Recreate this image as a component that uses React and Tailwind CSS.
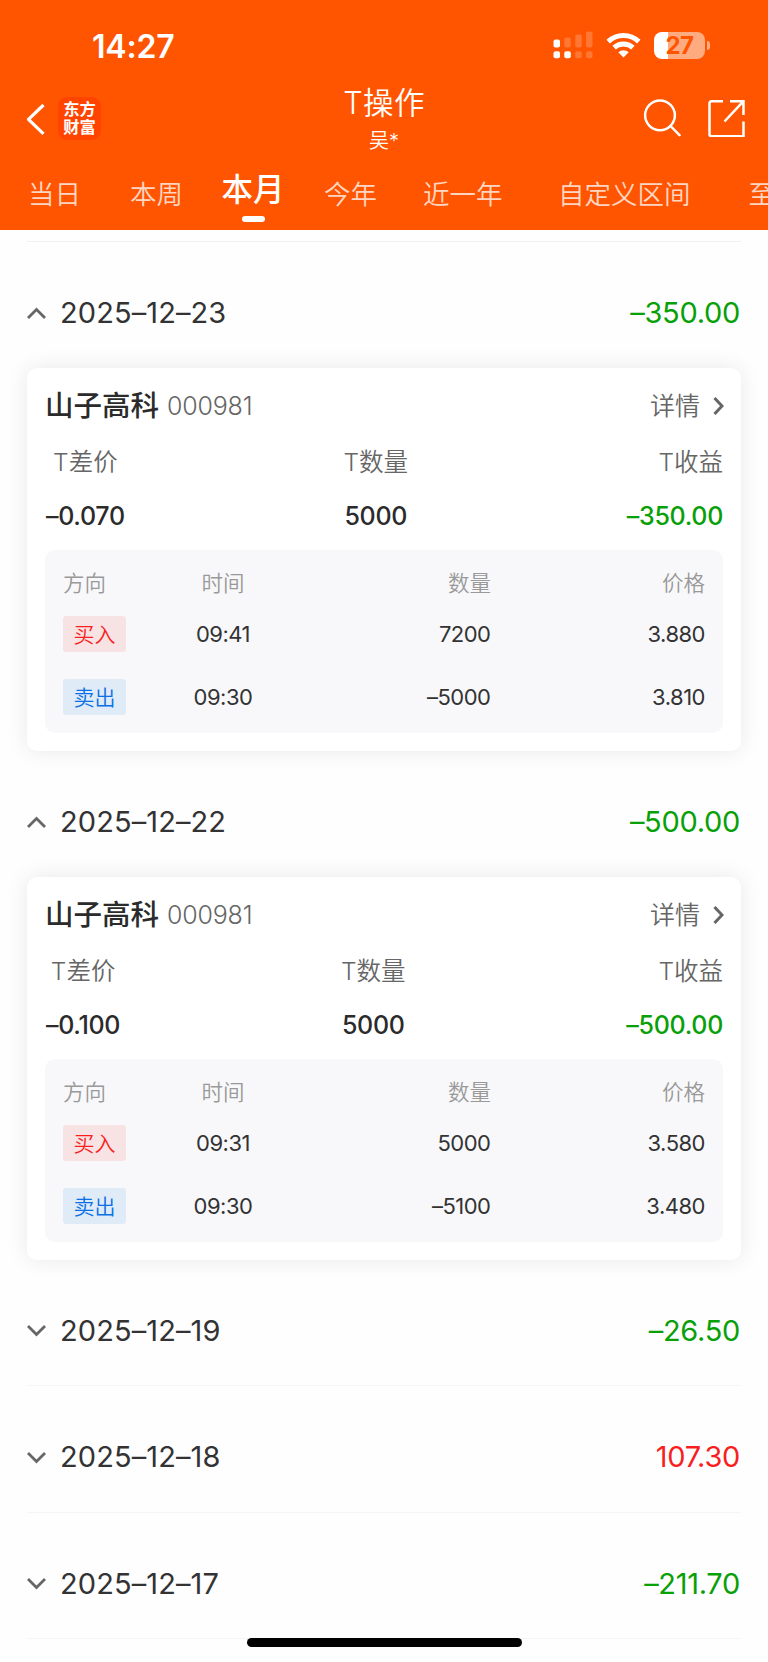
// ─────────────────────────────────────────────────────────────────────────────
// Data
// ─────────────────────────────────────────────────────────────────────────────

const TABS = [
  { label: '当日',       cls: '' },
  { label: '本周',       cls: 'ml-[49px]' },
  { label: '本月',       cls: 'ml-[38.5px]', active: true },
  { label: '今年',       cls: 'ml-[39.5px]' },
  { label: '近一年',     cls: 'ml-[46px]' },
  { label: '自定义区间', cls: 'ml-[55.5px]' },
  { label: '至今',       cls: 'ml-[58px]' },
]

const DAYS = [
  {
    date: '2025–12–23',
    profit: '–350.00',
    stock: {
      name: '山子高科', code: '000981', spread: '–0.070', qty: '5000', profit: '–350.00',
      trades: [
        { side: 'buy',  time: '09:41', qty: '7200',  price: '3.880' },
        { side: 'sell', time: '09:30', qty: '–5000', price: '3.810' },
      ],
    },
  },
  {
    date: '2025–12–22',
    profit: '–500.00',
    stock: {
      name: '山子高科', code: '000981', spread: '–0.100', qty: '5000', profit: '–500.00',
      trades: [
        { side: 'buy',  time: '09:31', qty: '5000',  price: '3.580' },
        { side: 'sell', time: '09:30', qty: '–5100', price: '3.480' },
      ],
    },
  },
  { date: '2025–12–19', profit: '–26.50' },
  { date: '2025–12–18', profit: '107.30' },
  { date: '2025–12–17', profit: '–211.70' },
]

function profitColor(value) {
  return value.startsWith('–') ? 'text-[#08a008]' : 'text-[#f91f1f]'
}

// ─────────────────────────────────────────────────────────────────────────────
// Header
// ─────────────────────────────────────────────────────────────────────────────

function StatusBar() {
  return (
    <div className="h-[84px] pt-[6px] pl-[92px] pr-[58px] flex items-center justify-between">
      <span className="mt-[4px] text-[32px] font-semibold leading-none tracking-[-0.2px]">14:27</span>
      <div className="flex items-center">
        {/* dual-sim signal */}
        <svg className="w-[40px] h-[28px]" viewBox="0 0 40 28" fill="#fff">
          <rect x="0.5" y="8.5" width="6.5" height="8" rx="2" />
          <rect x="11.3" y="6.5" width="6.5" height="10" rx="2" opacity=".2" />
          <rect x="22.2" y="3.5" width="6.5" height="13" rx="2" opacity=".2" />
          <rect x="33" y="0.5" width="6.5" height="16" rx="2" opacity=".2" />
          <rect x="0.5" y="20.3" width="6.5" height="7" rx="2" />
          <rect x="11.3" y="20.3" width="6.5" height="7" rx="2" />
          <rect x="22.2" y="20.3" width="6.5" height="7" rx="2" opacity=".2" />
          <rect x="33" y="20.3" width="6.5" height="7" rx="2" opacity=".2" />
        </svg>
        {/* wifi */}
        <svg className="w-[35px] h-[26px] ml-[13px]" viewBox="0 0 35 26" fill="none" stroke="#fff" strokeWidth="5">
          <path d="M2.2 9.6a22 22 0 0 1 30.6 0" />
          <path d="M8.1 15.6a13.8 13.8 0 0 1 18.8 0" />
          <path d="M17.5 25.5l-5.2-5.2a7.6 7.6 0 0 1 10.4 0z" fill="#fff" stroke="none" />
        </svg>
        {/* battery */}
        <div className="ml-[13px] w-[51px] h-[27px] pt-[1px] rounded-[8px] overflow-hidden bg-linear-to-r from-white from-27% to-[#ffab80] to-27% flex items-center justify-center">
          <span className="text-[24px] leading-none font-bold tracking-[-0.5px] text-[#ff5500]">27</span>
        </div>
        <div className="ml-[2px] w-[3px] h-[9px] rounded-r-full bg-[#ffab80]" />
      </div>
    </div>
  )
}

function NavBar() {
  return (
    <div className="h-[76px] grid grid-cols-3 px-[23px]">
      <div className="flex items-center pl-[3px] pb-[7px]">
        <svg className="w-[20px] h-[32px]" viewBox="0 0 20 32" fill="none" stroke="#fff" strokeWidth="3.2" strokeLinejoin="round">
          <path d="M17.5 2L2.5 16.3l15 14.5" />
        </svg>
        <div className="ml-[12px] mb-[1px] w-[43px] h-[43px] rounded-[9px] bg-[#ff4400] flex flex-col items-center justify-center text-[16.3px] leading-[18px] font-bold">
          <span>东方</span>
          <span>财富</span>
        </div>
      </div>
      <div className="flex flex-col items-center">
        <span className="mt-[-1px] text-[30.5px] leading-[40px] font-[350] tracking-[0.4px]">T操作</span>
        <span className="mt-[1px] text-[20px] leading-[34px] font-[350]">吴*</span>
      </div>
      <div className="flex items-center justify-end gap-[26px] pb-[8px]">
        <svg className="w-[38px] h-[38px]" viewBox="0 0 38 38" fill="none" stroke="#fff" strokeWidth="2.5" strokeLinecap="round">
          <circle cx="17" cy="16.3" r="14.9" />
          <path d="M27.5 27l9 9.2" />
        </svg>
        <svg className="w-[38px] h-[38px]" viewBox="0 0 38 38" fill="none" stroke="#fff" strokeWidth="2.5">
          <path d="M16 2.2H4.5a2 2 0 0 0-2 2v31a2 2 0 0 0 2 2h32V22.5" />
          <path d="M23 2.2h13.5V16M36.5 2.2L17.5 22.5" />
        </svg>
      </div>
    </div>
  )
}

function TabBar() {
  return (
    <div className="h-[70px] pl-[28px] flex items-start overflow-hidden whitespace-nowrap">
      {TABS.map(tab => (
        tab.active ? (
          <div key={tab.label} className={`shrink-0 flex flex-col items-center ${tab.cls}`}>
            <span className="text-[31.5px] leading-[40px] pt-[10px] font-medium">{tab.label}</span>
            <span className="mt-[6px] w-[23px] h-[6px] rounded-full bg-white" />
          </div>
        ) : (
          <span key={tab.label} className={`shrink-0 text-[26.5px] leading-[40px] pt-[14px] font-[350] text-[#ffd6c2] ${tab.cls}`}>
            {tab.label}
          </span>
        )
      ))}
    </div>
  )
}

// ─────────────────────────────────────────────────────────────────────────────
// List
// ─────────────────────────────────────────────────────────────────────────────

function DayRow({ day }) {
  const open = !!day.stock
  return (
    <div className={`h-[126.5px] pt-[16px] pr-[1px] flex items-center ${open ? '' : 'border-b-[1.5px] border-[#f5f5f6]'}`}>
      <svg className={`w-[19px] h-[12px] ${open ? '' : 'mt-[2px]'}`} viewBox="0 0 19 12" fill="none" stroke="#666" strokeWidth="2.8">
        <path d={open ? 'M1 11l8.5-8.5L18 11' : 'M1 1l8.5 8.5L18 1'} />
      </svg>
      <span className="ml-[14px] text-[29px] leading-none tracking-[0.1px] text-[#333]">{day.date}</span>
      <span className={`ml-auto text-[29px] leading-none tracking-[-0.3px] ${profitColor(day.profit)}`}>{day.profit}</span>
    </div>
  )
}

function SideBadge({ side }) {
  return (
    <span className={`w-[63px] h-[36px] rounded-[3px] flex items-center justify-center text-[21px] leading-none font-[350] tracking-normal
      ${side === 'buy' ? 'bg-[#f8e3e4] text-[#f91f1f]' : 'bg-[#dfebf7] text-[#0a70e5]'}`}>
      {side === 'buy' ? '买入' : '卖出'}
    </span>
  )
}

function Stat({ label, value, className }) {
  return (
    <div className={`flex flex-col ${className}`}>
      <span className="h-[54px] leading-[54px] text-[24.5px] font-[350] text-[#666]">{label}</span>
      <span className="h-[54px] leading-[54px] text-[25px] font-medium tracking-[-0.3px]">{value}</span>
    </div>
  )
}

function StockCard({ stock }) {
  return (
    <div className="h-[382.5px] px-[18px] rounded-[10px] bg-white shadow-[0_0_22px_rgba(0,0,0,0.09)]">
      {/* Title */}
      <div className="h-[67px] pt-[9px] flex items-center">
        <span className="text-[28.5px] leading-none font-medium text-[#2b2b2b]">{stock.name}</span>
        <span className="ml-[8px] text-[25px] leading-none font-light tracking-[-0.2px] text-[#666]">{stock.code}</span>
        <span className="ml-auto text-[25px] leading-none font-[350] text-[#666]">详情</span>
        <svg className="w-[11px] h-[18px] ml-[13px] mr-[-1px]" viewBox="0 0 11 18" fill="none" stroke="#666" strokeWidth="3">
          <path d="M1.5 1l7.5 8-7.5 8" />
        </svg>
      </div>

      {/* Summary */}
      <div className="flex justify-between pl-[1px] text-[#2b2b2b]">
        <Stat label="T差价" value={stock.spread} className="items-center" />
        <Stat label="T数量" value={stock.qty} className="items-center" />
        <Stat label="T收益" value={<span className={profitColor(stock.profit)}>{stock.profit}</span>} className="items-end" />
      </div>

      {/* Trades */}
      <div className="mt-[7px] h-[182.5px] px-[18px] rounded-[10px] bg-[#f8f8fb]">
        <div className="h-[52.5px] pt-[13px] grid grid-cols-[63px_194px_171px_1fr] items-center text-[21.5px] font-[350] text-[#999]">
          <span>方向</span>
          <span className="text-center">时间</span>
          <span className="text-right">数量</span>
          <span className="text-right">价格</span>
        </div>
        {stock.trades.map(t => (
          <div key={t.side} className="h-[63px] grid grid-cols-[63px_194px_170.5px_1fr] items-center text-[22px] tracking-[-0.5px] text-[#333]">
            <SideBadge side={t.side} />
            <span className="text-center">{t.time}</span>
            <span className="text-right">{t.qty}</span>
            <span className="text-right">{t.price}</span>
          </div>
        ))}
      </div>
    </div>
  )
}

// ─────────────────────────────────────────────────────────────────────────────
// Main page
// ─────────────────────────────────────────────────────────────────────────────

export default function App() {
  return (
    <div className="relative w-[768px] h-[1662px] overflow-hidden bg-[#fefefe] font-['Inter','Noto_Sans_CJK_SC',sans-serif]">
      <header className="h-[230px] bg-[#ff5500] text-white">
        <StatusBar />
        <NavBar />
        <TabBar />
      </header>

      <main className="px-[27px]">
        <div className="h-[11.5px] border-b-[1.5px] border-[#f0f0f1]" />
        {DAYS.map(day => (
          <section key={day.date}>
            <DayRow day={day} />
            {day.stock && <StockCard stock={day.stock} />}
          </section>
        ))}
      </main>

      {/* Home indicator */}
      <div className="absolute bottom-[15px] left-[247px] w-[275px] h-[9px] rounded-full bg-black" />
    </div>
  )
}
